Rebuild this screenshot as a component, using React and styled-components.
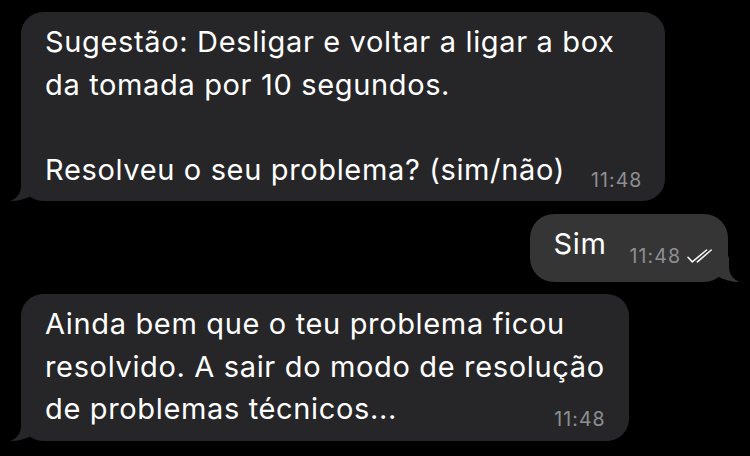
import styled, { createGlobalStyle } from 'styled-components';

const GlobalStyle = createGlobalStyle`
  html, body {
    margin: 0;
    padding: 0;
    background: #000;
  }
  body {
    font-family: Inter, "Liberation Sans", sans-serif;
    -webkit-font-smoothing: antialiased;
  }
`;

const messages = [
  {
    id: 1,
    side: 'left',
    lines: [
      'Sugestão: Desligar e voltar a ligar a box',
      'da tomada por 10 segundos.',
      '',
      'Resolveu o seu problema? (sim/não)',
    ],
    time: '11:48',
  },
  {
    id: 2,
    side: 'right',
    lines: ['Sim'],
    time: '11:48',
    read: true,
  },
  {
    id: 3,
    side: 'left',
    lines: [
      'Ainda bem que o teu problema ficou',
      'resolvido. A sair do modo de resolução',
      'de problemas técnicos...',
    ],
    time: '11:48',
  },
];

function Tail({ side, color }) {
  return (
    <TailSvg $side={side} viewBox='0 0 30 25' width={30} height={25}>
      <path
        d='M11 0 L11 10 C11 18 6 23 0 25 C8 25 16 23 23 19 L30 12 L30 0 Z'
        fill={color}
      />
    </TailSvg>
  );
}

const checks = (
  <svg width={25} height={14} viewBox='0 0 25 14' fill='none'>
    <path
      d='M1 8.3 L5.3 12.9 L19.6 1 M10.4 12.9 L24.2 1'
      stroke='#f2f2f2'
      strokeWidth={1.6}
      strokeLinecap='round'
      strokeLinejoin='round'
    />
  </svg>
);

export default function App() {
  return (
    <>
      <GlobalStyle />
      <Chat>
        {messages.map((m) => {
          const mine = m.side === 'right';
          const color = mine ? '#353535' : '#262628';
          const body = m.lines.slice(0, -1);
          const last = m.lines[m.lines.length - 1];
          return (
            <Bubble key={m.id} $mine={mine} $color={color}>
              {body.map((line, i) => (
                <Line key={i}>{line || '\u00a0'}</Line>
              ))}
              <LastRow $gap={mine ? 23 : 26}>
                <Line>{last}</Line>
                <Meta $drop={mine ? -1 : 1.5}>
                  <span>{m.time}</span>
                  {m.read && checks}
                </Meta>
              </LastRow>
              <Tail side={m.side} color={color} />
            </Bubble>
          );
        })}
      </Chat>
    </>
  );
}

const Chat = styled.div`
  display: flex;
  flex-direction: column;
  gap: 12.5px;
  padding: 12px 22px 0 21px;
`;

const Bubble = styled.div`
  position: relative;
  align-self: ${({ $mine }) => ($mine ? 'flex-end' : 'flex-start')};
  background: ${({ $color }) => $color};
  color: #fff;
  border-radius: ${({ $mine }) => ($mine ? '24px' : '22px')};
  padding: ${({ $mine }) => ($mine ? '9px 16px 16.5px 23px' : '9px 24px 10px 24px')};
  font-size: 29px;
  line-height: 42.5px;
  letter-spacing: 0.65px;
`;

const Line = styled.div`
  white-space: pre;
`;

const LastRow = styled.div`
  display: flex;
  align-items: flex-end;
  justify-content: space-between;
  gap: ${({ $gap }) => $gap}px;
`;

const Meta = styled.span`
  display: inline-flex;
  align-items: center;
  gap: 7px;
  font-size: 19.5px;
  line-height: 19px;
  letter-spacing: 1.1px;
  color: #8e8e92;
  margin-bottom: ${({ $drop }) => $drop}px;
  white-space: nowrap;

  span {
    margin-right: -1.1px;
  }

  svg {
    margin-top: -2px;
  }
`;

const TailSvg = styled.svg`
  position: absolute;
  bottom: 0;
  ${({ $side }) => ($side === 'right' ? 'right: -12px; transform: scaleX(-1);' : 'left: -11px;')}
`;
